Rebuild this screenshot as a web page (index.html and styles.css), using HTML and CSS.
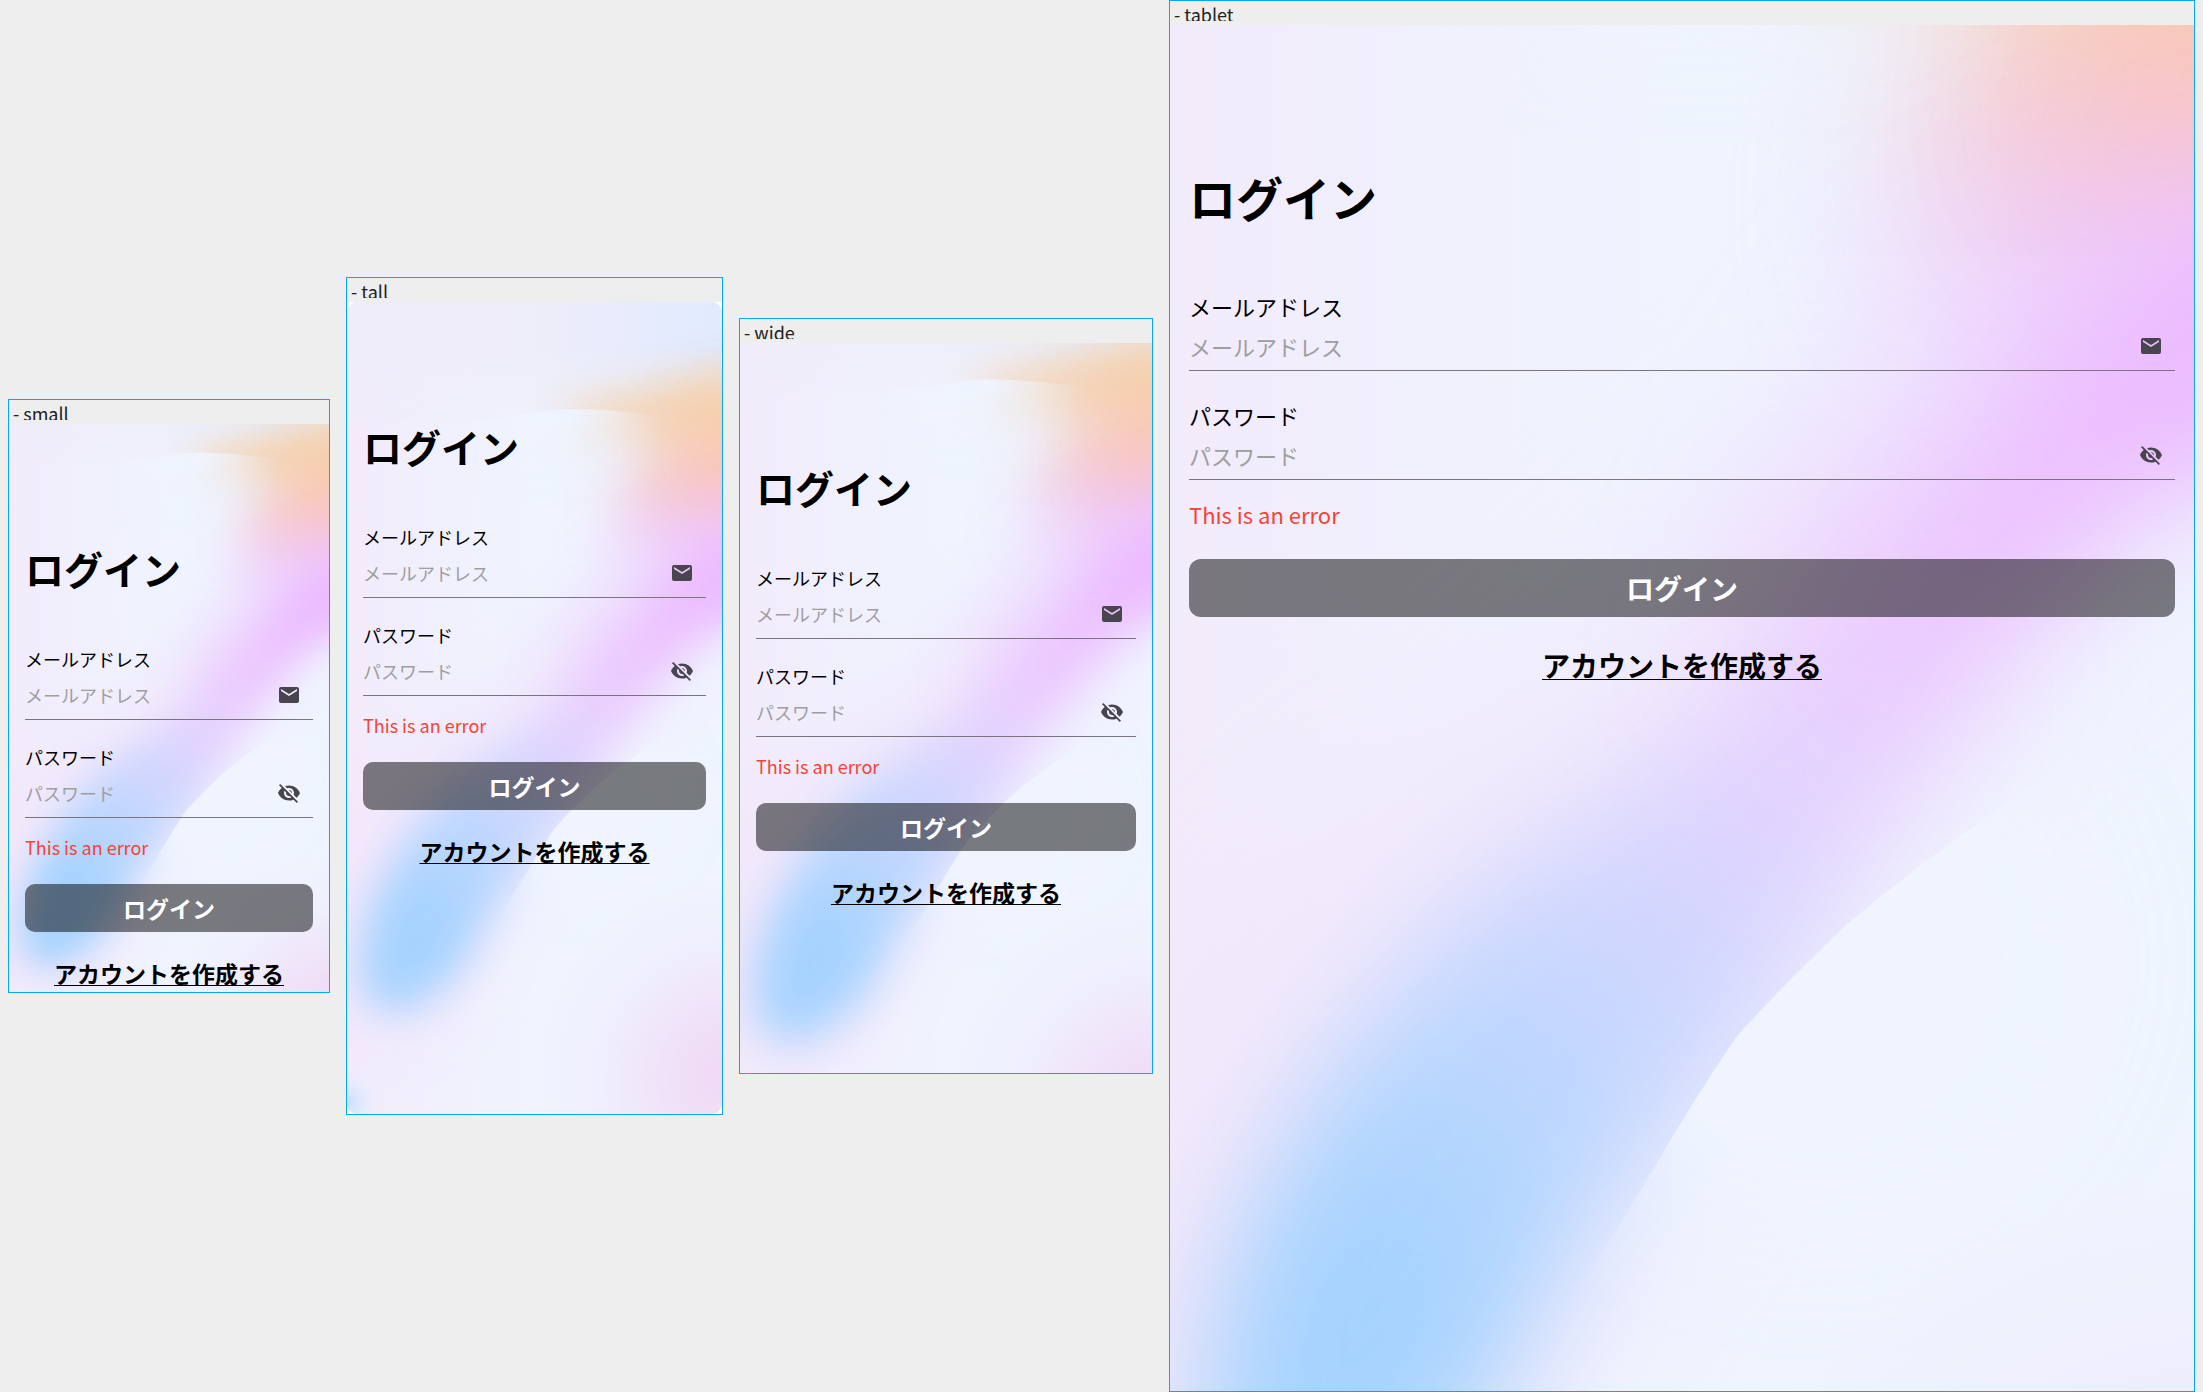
FILE: index.html
```html
<!DOCTYPE html>
<html lang="ja">
<head>
<meta charset="utf-8">
<meta name="viewport" content="width=device-width, initial-scale=1">
<title>ログイン</title>
<link rel="stylesheet" href="styles.css">
</head>
<body>
<svg class="sprite" aria-hidden="true" width="0" height="0">
  <defs>
    <linearGradient id="band" gradientUnits="userSpaceOnUse" x1="350" y1="250" x2="50" y2="650">
      <stop offset="0" stop-color="#ecb9ff"/>
      <stop offset=".16" stop-color="#edbeff"/>
      <stop offset=".32" stop-color="#ebcbff"/>
      <stop offset=".46" stop-color="#e1d3ff"/>
      <stop offset=".6" stop-color="#ced6ff"/>
      <stop offset=".76" stop-color="#b6d6ff"/>
      <stop offset=".9" stop-color="#a2d2ff"/>
      <stop offset="1" stop-color="#a2d2ff"/>
    </linearGradient>
    <linearGradient id="warm" gradientUnits="userSpaceOnUse" x1="345" y1="60" x2="345" y2="250">
      <stop offset="0" stop-color="#f5dcc0"/>
      <stop offset=".3" stop-color="#f7cda2"/>
      <stop offset=".5" stop-color="#fac3a8"/>
      <stop offset=".68" stop-color="#fabfc4"/>
      <stop offset=".83" stop-color="#f7bbe6"/>
      <stop offset="1" stop-color="#edbdff"/>
    </linearGradient>
    <linearGradient id="base" x1="0" y1="0" x2="1" y2="0">
      <stop offset="0" stop-color="#f2ebfb"/>
      <stop offset=".2" stop-color="#f1effd"/>
      <stop offset=".5" stop-color="#eff4ff"/>
      <stop offset="1" stop-color="#eff4ff"/>
    </linearGradient>
    <linearGradient id="sky" x1="0" y1="0" x2="1" y2="0">
      <stop offset="0" stop-color="#f0edfb"/>
      <stop offset=".5" stop-color="#eeedfa"/>
      <stop offset="1" stop-color="#e1eaff"/>
    </linearGradient>
    <linearGradient id="skyFade" x1="0" y1="0" x2="0" y2="1">
      <stop offset="0" stop-color="#fff"/>
      <stop offset=".4" stop-color="#fff"/>
      <stop offset="1" stop-color="#555"/>
    </linearGradient>
    <linearGradient id="waveFade" gradientUnits="userSpaceOnUse" x1="120" y1="110" x2="315" y2="122">
      <stop offset="0" stop-color="#eff3ff" stop-opacity="0"/>
      <stop offset=".2" stop-color="#eff3ff"/>
      <stop offset=".5" stop-color="#eef4ff"/>
      <stop offset="1" stop-color="#eff4ff" stop-opacity="0"/>
    </linearGradient>
    <linearGradient id="waveDown" gradientUnits="userSpaceOnUse" x1="0" y1="115" x2="0" y2="200">
      <stop offset="0" stop-color="#fff"/>
      <stop offset="1" stop-color="#000"/>
    </linearGradient>
    <radialGradient id="edgeFade" gradientUnits="userSpaceOnUse" cx="235" cy="498" r="150">
      <stop offset="0" stop-color="#fff"/>
      <stop offset=".45" stop-color="#fff"/>
      <stop offset=".75" stop-color="#666"/>
      <stop offset="1" stop-color="#000"/>
    </radialGradient>
    <radialGradient id="rose" gradientUnits="userSpaceOnUse" cx="385" cy="775" r="200">
      <stop offset="0" stop-color="#f0d8f4"/>
      <stop offset=".3" stop-color="#f0d8f4" stop-opacity=".7"/>
      <stop offset=".65" stop-color="#f0d8f4" stop-opacity=".2"/>
      <stop offset="1" stop-color="#f0d8f4" stop-opacity="0"/>
    </radialGradient>
    <radialGradient id="drop" gradientUnits="userSpaceOnUse" cx="0" cy="800" r="36">
      <stop offset="0" stop-color="#c4deff"/>
      <stop offset="1" stop-color="#eef3ff" stop-opacity="0"/>
    </radialGradient>
    <filter id="soft" filterUnits="userSpaceOnUse" x="-120" y="-60" width="640" height="940" color-interpolation-filters="sRGB"><feGaussianBlur stdDeviation="20"/></filter>
    <filter id="wide" filterUnits="userSpaceOnUse" x="-120" y="-60" width="640" height="940" color-interpolation-filters="sRGB"><feGaussianBlur stdDeviation="32"/></filter>
    <mask id="skyMask"><rect width="375" height="120" fill="url(#skyFade)"/></mask>
    <mask id="waveMask"><rect width="375" height="240" fill="url(#waveDown)"/></mask>
    <mask id="edgeMask"><rect width="375" height="812" fill="url(#edgeFade)"/></mask>
    <clipPath id="card"><rect width="375" height="812" rx="11"/></clipPath>
  </defs>
  <symbol id="wallpaper" viewBox="0 0 375 812" preserveAspectRatio="xMidYMid slice">
    <g clip-path="url(#card)">
      <rect width="375" height="812" fill="url(#base)"/>
      <rect width="375" height="120" fill="url(#sky)" mask="url(#skyMask)"/>
      <path d="M460 68L370 70L300 86L230 102L200 128L330 140L460 135Z" fill="#f6d3ad" opacity=".85" filter="url(#soft)"/>
      <path d="M480 95L345 105L285 150L268 250L480 290Z" fill="url(#warm)" opacity=".72" filter="url(#wide)"/>
      <path d="M120 117C165 118 195 106 228 107C265 107 290 112 330 115V240H120Z" fill="url(#waveFade)" mask="url(#waveMask)"/>
      <path d="M490 90L360 105L334 150L325 215L490 240Z" fill="url(#warm)" opacity=".7" filter="url(#wide)"/>
      <path d="M-20 560L40 470L150 390L230 300L300 400L170 600L90 735L-20 720Z" fill="#f1e5fb" opacity=".8" filter="url(#wide)"/>
      <path d="M460 205L350 215L275 260L230 330L215 400L290 400L350 335L460 290Z" fill="#ecc4ff" opacity=".6" filter="url(#wide)"/>
      <path d="M480 228L375 234L325 272L290 320L245 365L190 418L105 482L58 540L26 600L12 650L18 700L58 712L108 675L145 608L178 565L226 506L262 446L305 380L350 330L480 275Z" fill="url(#band)" opacity=".94" filter="url(#soft)"/>
      <path d="M375 412L320 431Q270 466 247 486Q220 512 207 527Q190 552 174 580L130 650L200 812H375Z" fill="#eff4ff" mask="url(#edgeMask)"/>
      <rect width="375" height="812" fill="url(#rose)"/>
      <rect width="375" height="812" fill="url(#drop)"/>
    </g>
  </symbol>
  <symbol id="mail" viewBox="0 0 24 24">
    <path d="M20 4H4c-1.100 0-1.990.9-1.990 2L2 18c0 1.100.9 2 2 2h16c1.100 0 2-.9 2-2V6c0-1.100-.9-2-2-2zm0 4l-8 5-8-5V6l8 5 8-5v2z"/>
  </symbol>
  <symbol id="eye-off" viewBox="0 0 24 24">
    <path d="M12 7c2.760 0 5 2.240 5 5 0 .65-.13 1.260-.36 1.830l2.920 2.920c1.510-1.260 2.700-2.890 3.430-4.750-1.730-4.390-6-7.500-11-7.500-1.400 0-2.740.25-3.980.7l2.160 2.160C10.740 7.130 11.350 7 12 7zM2 4.270l2.280 2.280.46.46C3.080 8.300 1.780 10.020 1 12c1.730 4.390 6 7.500 11 7.500 1.550 0 3.030-.3 4.380-.84l.42.42L19.730 22 21 20.730 3.270 3 2 4.270zM7.530 9.800l1.550 1.550c-.05.21-.08.43-.08.65 0 1.660 1.340 3 3 3 .22 0 .44-.03.65-.08l1.550 1.550c-.67.33-1.410.53-2.200.53-2.760 0-5-2.240-5-5 0-.79.2-1.530.53-2.200zm4.310-.78l3.150 3.150.02-.16c0-1.660-1.340-3-3-3l-.17.010z"/>
  </symbol>
</svg>

<main class="board">
  <section class="device device-small">
    <h2 class="device-name">- small</h2>
    <div class="screen">
      <svg class="wallpaper" aria-hidden="true"><use href="#wallpaper"/></svg>
      <form class="login">
        <h1 class="title">ログイン</h1>
        <div class="field">
          <label for="small-mail">メールアドレス</label>
          <div class="control"><input id="small-mail" type="email" placeholder="メールアドレス"><span class="adornment"><svg class="icon" aria-hidden="true"><use href="#mail"/></svg></span></div>
        </div>
        <div class="field">
          <label for="small-pass">パスワード</label>
          <div class="control"><input id="small-pass" type="password" placeholder="パスワード"><button class="adornment" type="button" aria-label="パスワードを表示"><svg class="icon" aria-hidden="true"><use href="#eye-off"/></svg></button></div>
        </div>
        <p class="error">This is an error</p>
        <button class="submit" type="submit">ログイン</button>
        <a class="signup" href="#signup">アカウントを作成する</a>
      </form>
    </div>
  </section>

  <section class="device device-tall">
    <h2 class="device-name">- tall</h2>
    <div class="screen">
      <svg class="wallpaper" aria-hidden="true"><use href="#wallpaper"/></svg>
      <form class="login">
        <h1 class="title">ログイン</h1>
        <div class="field">
          <label for="tall-mail">メールアドレス</label>
          <div class="control"><input id="tall-mail" type="email" placeholder="メールアドレス"><span class="adornment"><svg class="icon" aria-hidden="true"><use href="#mail"/></svg></span></div>
        </div>
        <div class="field">
          <label for="tall-pass">パスワード</label>
          <div class="control"><input id="tall-pass" type="password" placeholder="パスワード"><button class="adornment" type="button" aria-label="パスワードを表示"><svg class="icon" aria-hidden="true"><use href="#eye-off"/></svg></button></div>
        </div>
        <p class="error">This is an error</p>
        <button class="submit" type="submit">ログイン</button>
        <a class="signup" href="#signup">アカウントを作成する</a>
      </form>
    </div>
  </section>

  <section class="device device-wide">
    <h2 class="device-name">- wide</h2>
    <div class="screen">
      <svg class="wallpaper" aria-hidden="true"><use href="#wallpaper"/></svg>
      <form class="login">
        <h1 class="title">ログイン</h1>
        <div class="field">
          <label for="wide-mail">メールアドレス</label>
          <div class="control"><input id="wide-mail" type="email" placeholder="メールアドレス"><span class="adornment"><svg class="icon" aria-hidden="true"><use href="#mail"/></svg></span></div>
        </div>
        <div class="field">
          <label for="wide-pass">パスワード</label>
          <div class="control"><input id="wide-pass" type="password" placeholder="パスワード"><button class="adornment" type="button" aria-label="パスワードを表示"><svg class="icon" aria-hidden="true"><use href="#eye-off"/></svg></button></div>
        </div>
        <p class="error">This is an error</p>
        <button class="submit" type="submit">ログイン</button>
        <a class="signup" href="#signup">アカウントを作成する</a>
      </form>
    </div>
  </section>

  <section class="device device-tablet">
    <h2 class="device-name">- tablet</h2>
    <div class="screen">
      <svg class="wallpaper" aria-hidden="true"><use href="#wallpaper"/></svg>
      <form class="login">
        <h1 class="title">ログイン</h1>
        <div class="field">
          <label for="tablet-mail">メールアドレス</label>
          <div class="control"><input id="tablet-mail" type="email" placeholder="メールアドレス"><span class="adornment"><svg class="icon" aria-hidden="true"><use href="#mail"/></svg></span></div>
        </div>
        <div class="field">
          <label for="tablet-pass">パスワード</label>
          <div class="control"><input id="tablet-pass" type="password" placeholder="パスワード"><button class="adornment" type="button" aria-label="パスワードを表示"><svg class="icon" aria-hidden="true"><use href="#eye-off"/></svg></button></div>
        </div>
        <p class="error">This is an error</p>
        <button class="submit" type="submit">ログイン</button>
        <a class="signup" href="#signup">アカウントを作成する</a>
      </form>
    </div>
  </section>
</main>
</body>
</html>
```
FILE: styles.css
```css
* {
  box-sizing: border-box;
}

body {
  margin: 0;
  background: #eee;
  color: #000;
  font-family: "Noto Sans CJK JP", sans-serif;
}

.sprite {
  position: absolute;
}

.board {
  display: flex;
  align-items: center;
  gap: 16px;
  min-height: 100vh;
  padding: 0 8px;
}

/* Each device frame takes a share of the board that follows its screen width. */
.device {
  --title: 39px;
  --title-line: 58px;
  --text: 18px;
  --text-line: 26px;
  --action: 23px;
  --action-line: 34px;
  flex: 320 1 0;
  min-width: 0;
  border: 1px solid #03a9f4;
}

.device-tall {
  flex-grow: 375;
}

.device-wide {
  flex-grow: 412;
}

.device-tablet {
  --title: 47px;
  --title-line: 70px;
  --text: 22px;
  --text-line: 32px;
  --action: 28px;
  --action-line: 40px;
  flex-grow: 1024;
}

.device-name {
  height: 16px;
  margin: 4px;
  overflow: hidden;
  color: #212121;
  font-size: 18px;
  font-weight: 400;
  line-height: 18px;
}

.screen {
  display: grid;
  aspect-ratio: 320 / 568;
  background: #fff;
}

.device-tall .screen {
  aspect-ratio: 375 / 812;
}

.device-wide .screen {
  aspect-ratio: 412 / 730;
}

.device-tablet .screen {
  aspect-ratio: 1024 / 1366;
}

.wallpaper,
.login {
  grid-area: 1 / 1;
  min-width: 0;
}

.wallpaper {
  width: 100%;
  height: 100%;
}

.login {
  display: flex;
  flex-direction: column;
  z-index: 1;
  padding: 115px 16px 0;
}

.device-tablet .login {
  padding: 137px 19px 0;
}

.title {
  margin: 0 0 49px;
  font-size: var(--title);
  font-weight: 700;
  line-height: var(--title-line);
}

.device-tablet .title {
  margin-bottom: 58px;
}

.field + .field {
  margin-top: 24px;
}

.device-tablet .field + .field {
  margin-top: 28px;
}

.field label {
  display: block;
  font-size: var(--text);
  line-height: var(--text-line);
}

.control {
  display: flex;
  align-items: center;
  height: 48px;
  padding-bottom: 2px;
  border-bottom: 1px solid #79747e;
}

.device-tablet .control {
  height: 49px;
  padding-bottom: 0;
}

.control input {
  flex: 1;
  min-width: 0;
  height: 44px;
  padding: 0;
  border: 0;
  outline: 0;
  background: none;
  font: inherit;
  font-size: var(--text);
}

.control input::placeholder {
  color: #9e9e9e;
  opacity: 1;
}

.adornment {
  display: grid;
  place-items: center;
  width: 48px;
  height: 44px;
  padding: 0;
  border: 0;
  background: none;
}

.icon {
  width: 24px;
  height: 24px;
  fill: #49454f;
}

.error {
  margin: 16px 0 24px;
  color: #f44336;
  font-size: var(--text);
  line-height: var(--text-line);
}

.device-tablet .error {
  margin: 18px 0 29px;
}

.submit {
  height: 48px;
  padding: 0;
  border: 0;
  border-radius: 10px;
  background: rgba(0, 0, 0, 0.5);
  color: #fff;
  font: inherit;
  font-size: var(--action);
  font-weight: 700;
}

.device-tablet .submit {
  height: 58px;
  border-radius: 12px;
}

.signup {
  align-self: center;
  margin-top: 24px;
  color: #000;
  font-size: var(--action);
  font-weight: 700;
  line-height: var(--action-line);
  text-decoration: underline 1px;
  text-decoration-skip-ink: none;
  text-underline-offset: 2px;
  white-space: nowrap;
}

.device-tablet .signup {
  margin-top: 28px;
}
```
